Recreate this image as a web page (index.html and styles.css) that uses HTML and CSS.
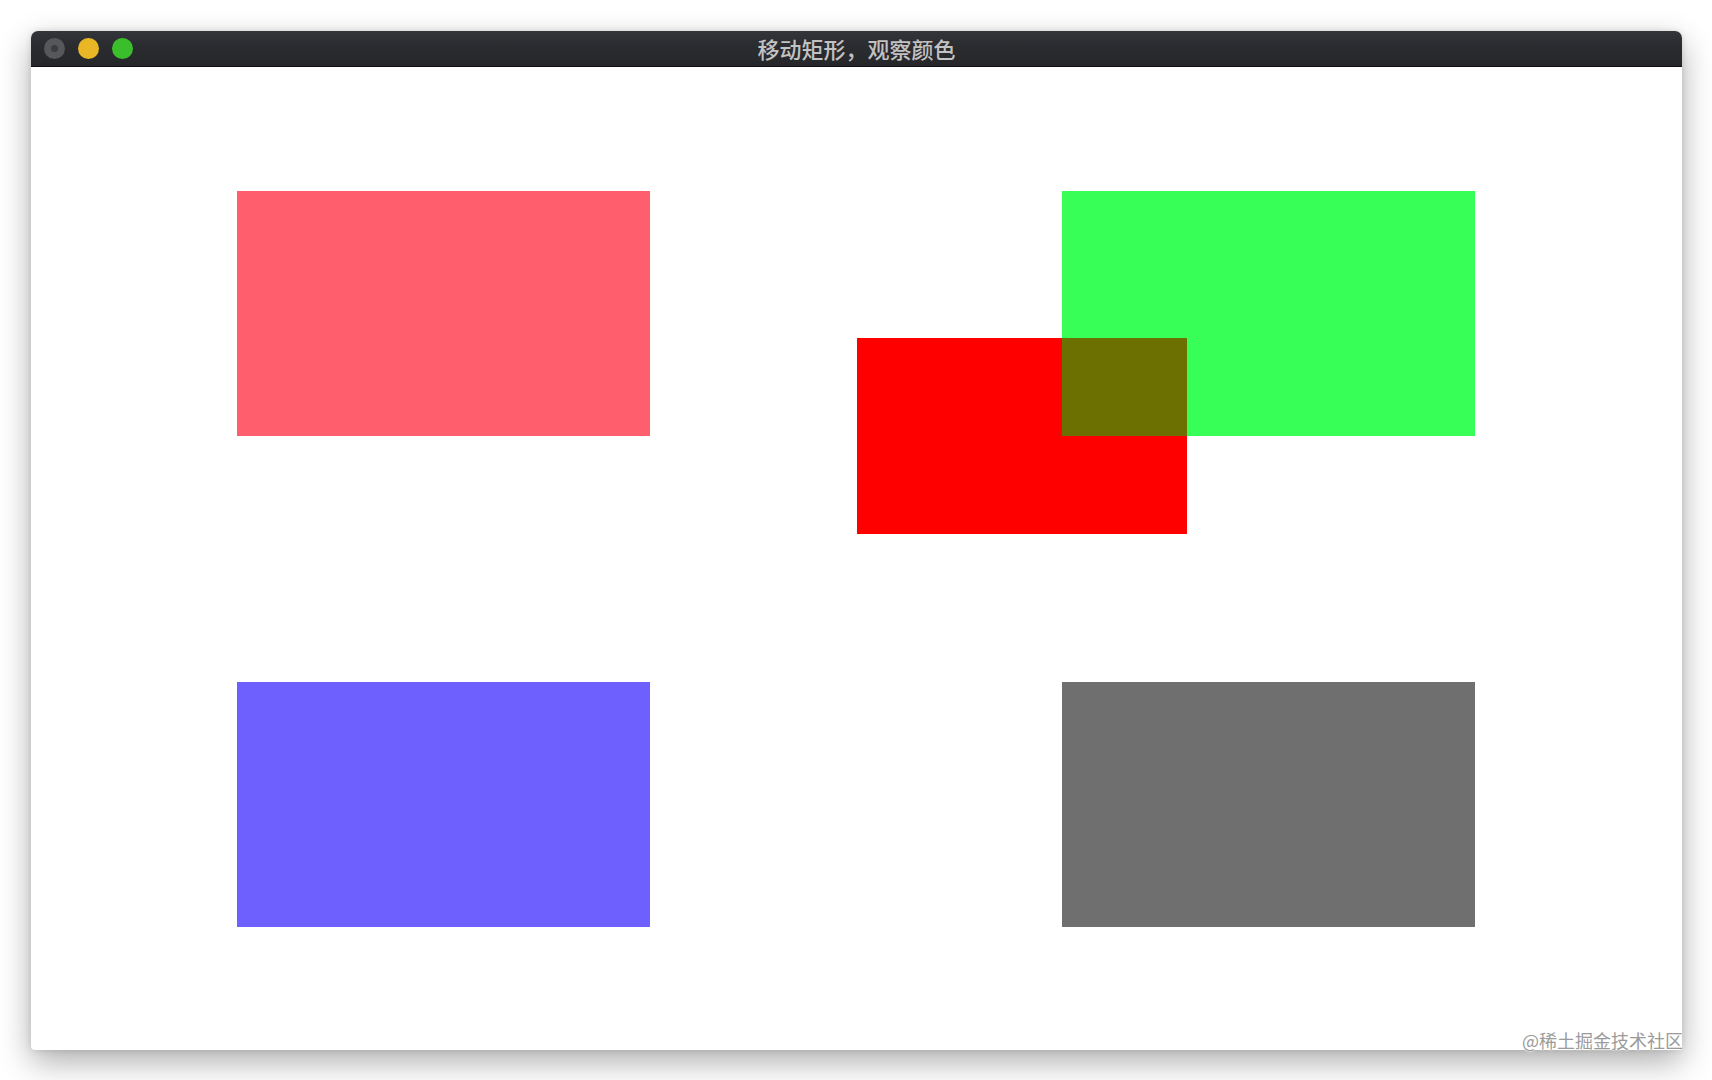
FILE: index.html
```html
<!DOCTYPE html>
<html lang="zh">
<head>
<meta charset="utf-8">
<title>移动矩形，观察颜色</title>
<link rel="stylesheet" href="styles.css">
</head>
<body>
<div class="window">
  <div class="titlebar">
    <div class="lights">
      <span class="light close"><span class="dot"></span></span>
      <span class="light min"></span>
      <span class="light max"></span>
    </div>
    <div class="title">移动矩形，观察颜色</div>
  </div>
  <div class="content">
    <div class="grid">
      <div class="rect pink"></div>
      <div class="rect green"></div>
      <div class="rect blue"></div>
      <div class="rect gray"></div>
    </div>
    <div class="mover"><div class="overlap"></div></div>
  </div>
</div>
<div class="watermark">@稀土掘金技术社区</div>
</body>
</html>
```
FILE: styles.css
```css
html, body {
  margin: 0;
  padding: 0;
  background: #ffffff;
  width: 1712px;
  height: 1080px;
  overflow: hidden;
  font-family: "Noto Sans CJK SC", "Noto Sans", sans-serif;
}
body {
  position: relative;
}
.window {
  margin: 31px 0 0 31px;
  width: 1651px;
  height: 1019px;
  border-radius: 7px 7px 4px 4px;
  background: #ffffff;
  box-shadow: 0 12px 32px rgba(0, 0, 0, 0.32), 0 0 6px rgba(0, 0, 0, 0.12);
  display: flex;
  flex-direction: column;
  overflow: hidden;
}
.titlebar {
  height: 35px;
  flex: 0 0 35px;
  background: linear-gradient(#34353a, #2b2c30 40%, #26272b);
  border-bottom: 1px solid #0e0e10;
  display: flex;
  align-items: center;
  position: relative;
}
.lights {
  display: flex;
  gap: 13px;
  padding-left: 13px;
  align-items: center;
}
.light {
  width: 21px;
  height: 21px;
  border-radius: 50%;
  display: flex;
  align-items: center;
  justify-content: center;
}
.light.close { background: #56575b; }
.light.close .dot {
  width: 7px;
  height: 7px;
  border-radius: 50%;
  background: #3b3c40;
}
.light.min { background: #e9b726; }
.light.max { background: #3bbe2b; }
.title {
  position: absolute;
  left: 0;
  right: 0;
  top: 0;
  bottom: 1px;
  display: flex;
  align-items: center;
  justify-content: center;
  color: #c2c2c2;
  font-size: 22px;
  font-weight: 500;
}
.content {
  flex: 1;
  position: relative;
}
.grid {
  display: grid;
  grid-template-columns: 413px 413px;
  grid-template-rows: 245px 245px;
  column-gap: 412px;
  row-gap: 246px;
  padding: 124px 0 0 206px;
}
.rect { width: 413px; height: 245px; }
.pink { background: #ff5e6c; }
.green { background: #38ff58; }
.blue { background: #6e60ff; }
.gray { background: #6f6f6f; }
.mover {
  position: absolute;
  left: 826px;
  top: 271px;
  width: 330px;
  height: 196px;
  background: #ff0000;
}
.overlap {
  position: absolute;
  left: 205px;
  top: 0;
  width: 125px;
  height: 98px;
  background: #6b7000;
}
.watermark {
  position: absolute;
  right: 29px;
  top: 1028px;
  font-size: 18px;
  line-height: 24px;
  color: #9b9b9b;
  text-shadow: 0 0 2px #ffffff, 0 0 2px #ffffff;
}
```
